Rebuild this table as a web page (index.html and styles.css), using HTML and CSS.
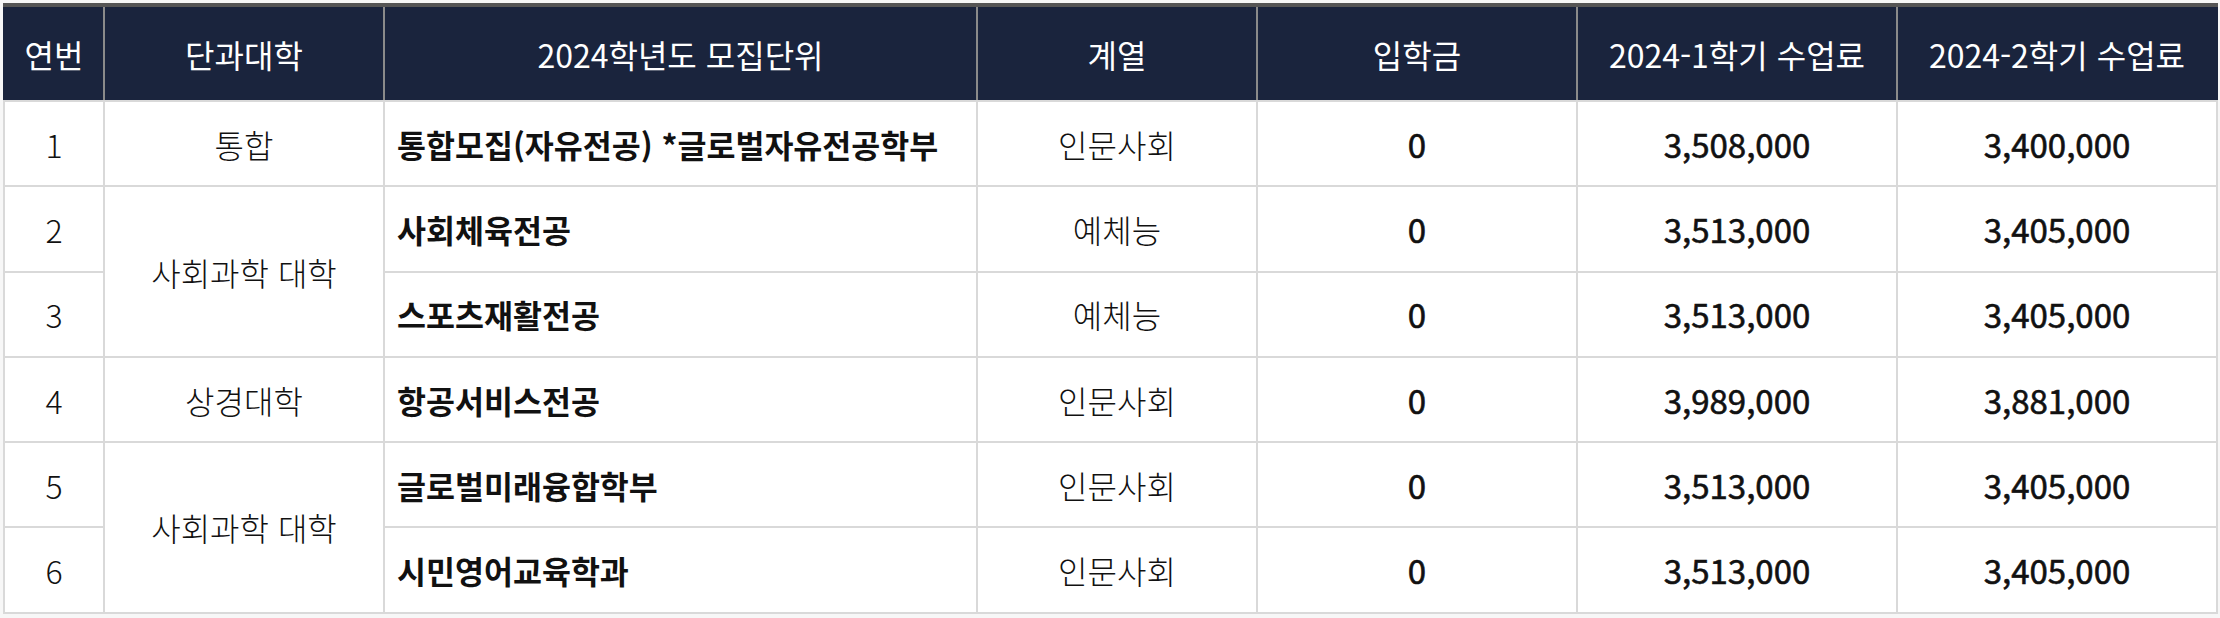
FILE: index.html
```html
<!DOCTYPE html>
<html lang="ko">
<head>
<meta charset="utf-8">
<link rel="stylesheet" href="styles.css">
</head>
<body>
<table class="fee">
  <colgroup>
    <col class="c-no"><col class="c-col"><col class="c-unit"><col class="c-grp"><col class="c-num"><col class="c-num"><col class="c-num">
  </colgroup>
  <thead>
    <tr>
      <th>연번</th><th>단과대학</th><th>2024학년도 모집단위</th><th>계열</th><th>입학금</th><th>2024-1학기 수업료</th><th>2024-2학기 수업료</th>
    </tr>
  </thead>
  <tbody>
    <tr><td class="lt">1</td><td class="lt">통합</td><td class="unit">통합모집(자유전공) *글로벌자유전공학부</td><td class="lt">인문사회</td><td class="num">0</td><td class="num">3,508,000</td><td class="num">3,400,000</td></tr>
    <tr><td class="lt">2</td><td class="lt" rowspan="2">사회과학 대학</td><td class="unit">사회체육전공</td><td class="lt">예체능</td><td class="num">0</td><td class="num">3,513,000</td><td class="num">3,405,000</td></tr>
    <tr><td class="lt">3</td><td class="unit">스포츠재활전공</td><td class="lt">예체능</td><td class="num">0</td><td class="num">3,513,000</td><td class="num">3,405,000</td></tr>
    <tr><td class="lt">4</td><td class="lt">상경대학</td><td class="unit">항공서비스전공</td><td class="lt">인문사회</td><td class="num">0</td><td class="num">3,989,000</td><td class="num">3,881,000</td></tr>
    <tr><td class="lt">5</td><td class="lt" rowspan="2">사회과학 대학</td><td class="unit">글로벌미래융합학부</td><td class="lt">인문사회</td><td class="num">0</td><td class="num">3,513,000</td><td class="num">3,405,000</td></tr>
    <tr><td class="lt">6</td><td class="unit">시민영어교육학과</td><td class="lt">인문사회</td><td class="num">0</td><td class="num">3,513,000</td><td class="num">3,405,000</td></tr>
  </tbody>
</table>
</body>
</html>
```
FILE: styles.css
```css
html, body {
  margin: 0;
  padding: 0;
  background: #f7f7f7;
}
body {
  padding: 3px 0 0 3px;
  font-family: "Noto Sans CJK KR", "Noto Sans", sans-serif;
  color: #111;
}
.fee {
  border-collapse: collapse;
  table-layout: fixed;
  width: 2215px;
  background: #fff;
  border-top: 4px solid #555;
}
.c-no { width: 100px; }
.c-col { width: 280px; }
.c-unit { width: 593px; }
.c-grp { width: 280px; }
.c-num { width: 320px; }
.fee th {
  background: #1a243d;
  color: #fff;
  font-weight: 400;
  font-size: 32px;
  height: 93px;
  padding: 0;
  border-left: 2px solid #8a8a8a;
  border-right: 2px solid #8a8a8a;
  border-bottom: 2px solid #d9d9d9;
  text-align: center;
  vertical-align: middle;
}
.fee th:first-child { border-left-color: #1a243d; }
.fee th:last-child { border-right-color: #1a243d; }
.fee td {
  border: 2px solid #d9d9d9;
  height: 83.3px;
  padding: 0;
  text-align: center;
  vertical-align: middle;
  font-size: 32px;
}
.fee td.lt { font-weight: 300; }
.fee td.num {
  font-weight: 400;
  font-size: 33px;
  -webkit-text-stroke: 0.6px #111;
}
.fee td.unit {
  text-align: left;
  padding-left: 12px;
  font-weight: 700;
  font-size: 31.5px;
}
```
